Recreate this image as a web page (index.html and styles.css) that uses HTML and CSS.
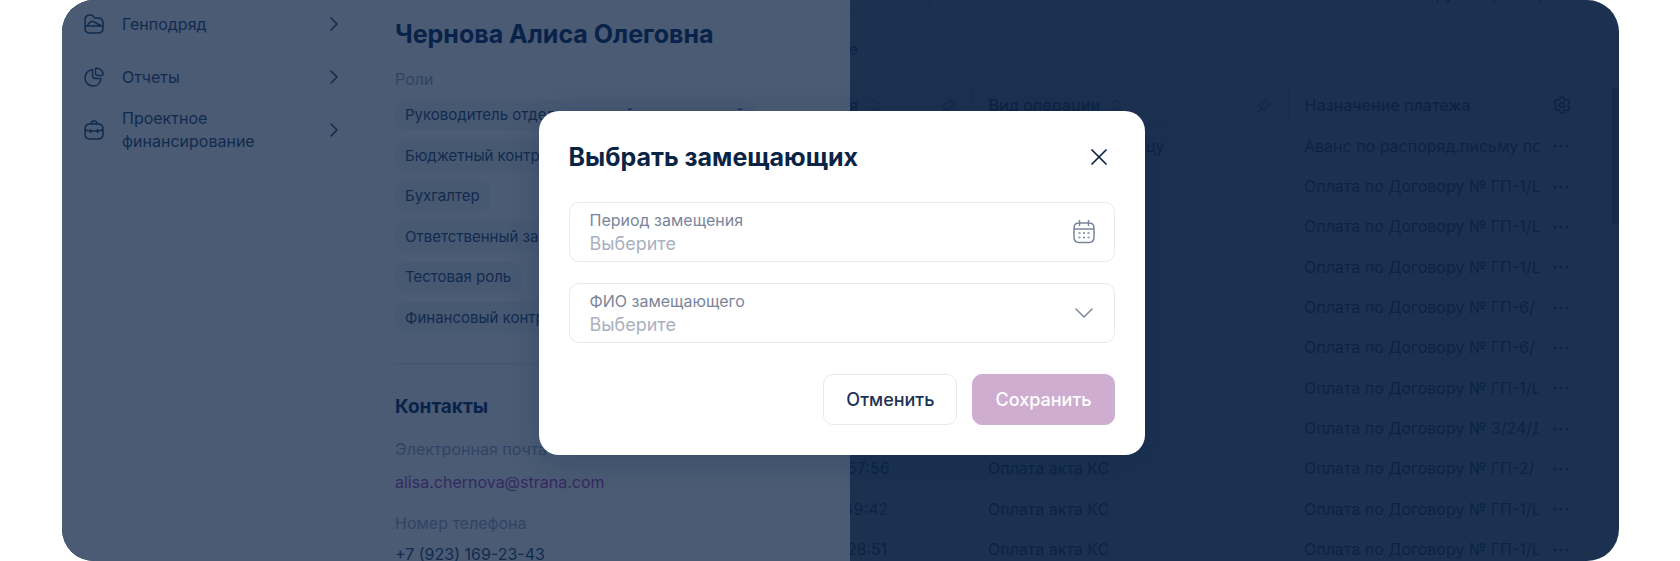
FILE: index.html
```html
<!DOCTYPE html>
<html lang="ru">

<head>
    <meta charset="UTF-8">
    <meta name="viewport" content="width=device-width, initial-scale=1.0">
    <title>Выбрать замещающих</title>
    <link rel="stylesheet" href="styles.css">
</head>

<body>
    <svg class="sprite" width="0" height="0">
        <symbol id="chevron" viewBox="0 0 8 14"><path d="M1 1l6 6-6 6" /></symbol>
        <symbol id="sort" viewBox="0 0 10 12"><path d="M1 4l4-3 4 3M1 8l4 3 4-3" /></symbol>
        <symbol id="pin" viewBox="0 0 16 16"><path d="M1 15l4.500-4.500M9.500 1.500l5 5-1.500 1-1.500 0-2.500 3 0 2-1.500 1.500-6-6 1.500-1.500 2 0 3.500-2.500 0-1.500z" /></symbol>
        <symbol id="dots" viewBox="0 0 16 4"><circle cx="2" cy="2" r="1.500" /><circle cx="8" cy="2" r="1.500" /><circle cx="14" cy="2" r="1.500" /></symbol>
    </svg>

    <div class="app">
        <div class="drawer">
            <nav class="sidebar">
                <a class="nav-item" href="#">
                    <svg class="nav-icon" viewBox="0 0 20 20"><path d="M1 6c0-3.500 1.500-5 5-5h1c1 0 1.600.3 2.200 1.100l1 1.300c.4.500.8.600 1.600.600H14c3.500 0 5 1.500 5 5v5c0 3.500-1.500 5-5 5H6c-3.500 0-5-1.500-5-5zM1 12h18M3.500 11.500c1.500-3 3.500-4.500 5.500-4 2.500.5 3 2.200 7.500 3.700" /></svg>
                    <span class="nav-label">Генподряд</span>
                    <svg class="nav-chevron"><use href="#chevron" /></svg>
                </a>
                <a class="nav-item" href="#">
                    <svg class="nav-icon" viewBox="0 0 20 20"><path d="M8.500 2.500v6c0 2 1 3 3 3h5.500c-.5 4.500-3.800 7.500-8 7.500-4.500 0-8-3.600-8-8 0-4.300 3.200-8 7.500-8.500zM12 1c4 .3 7 3 7 6.500 0 .6-.3 1-1 1h-4.500c-1.300 0-2-.7-2-2V2c0-.6.200-1 .5-1z" /></svg>
                    <span class="nav-label">Отчеты</span>
                    <svg class="nav-chevron"><use href="#chevron" /></svg>
                </a>
                <a class="nav-item" href="#">
                    <svg class="nav-icon" viewBox="0 0 20 20"><path d="M1 9c0-3.500 1.500-5 5-5h8c3.500 0 5 1.500 5 5v5c0 3.500-1.500 5-5 5H6c-3.500 0-5-1.500-5-5zM7 4c0-2 1-3 3-3s3 1 3 3M1 9c1 1.400 2.500 2 5 2h8c2.500 0 4-.6 5-2M6.500 9.500v3M13.500 9.500v3" /></svg>
                    <span class="nav-label">Проектное финансирование</span>
                    <svg class="nav-chevron"><use href="#chevron" /></svg>
                </a>
            </nav>

            <section class="profile">
                <h1>Чернова Алиса Олеговна</h1>
                <p class="muted">Роли</p>
                <ul class="roles">
                    <li>Руководитель отдела торговой координацией</li>
                    <li>Бюджетный контролер</li>
                    <li>Бухгалтер</li>
                    <li>Ответственный за оплату</li>
                    <li>Тестовая роль</li>
                    <li>Финансовый контролер</li>
                </ul>
                <div class="contacts">
                    <h2>Контакты</h2>
                    <p class="muted">Электронная почта</p>
                    <a class="email" href="mailto:alisa.chernova@strana.com">alisa.chernova@strana.com</a>
                    <p class="muted">Номер телефона</p>
                    <p>+7 (923) 169-23-43</p>
                </div>
            </section>
        </div>

        <main class="payments">
            <div class="toolbar">
                <div class="search"></div>
                <a class="reset" href="#">Загрузить реестр</a>
            </div>
            <p class="filter">Показать удаленные</p>
            <table>
                <thead>
                    <tr>
                        <th class="col-date"><div class="head"><span>Дата создания</span><svg class="sort"><use href="#sort" /></svg><svg class="pin"><use href="#pin" /></svg></div></th>
                        <th class="col-type"><div class="head"><span>Вид операции</span><svg class="sort"><use href="#sort" /></svg><svg class="pin"><use href="#pin" /></svg></div></th>
                        <th class="col-purpose">Назначение платежа</th>
                        <th class="col-actions"><svg class="gear" viewBox="0 0 18 18"><path d="M7.500 1h3l.7 2.200 1.600 1 2.300-.6 1.600 2.700L15.200 8v2l1.500 1.700-1.600 2.700-2.300-.6-1.600 1-.7 2.200h-3l-.7-2.200-1.600-1-2.300.6-1.600-2.700L2.800 10V8L1.300 6.300l1.600-2.700 2.300.6 1.600-1z" /><circle cx="9" cy="9" r="2.500" /></svg></th>
                    </tr>
                </thead>
                <tbody>
                    <tr><td>11.03.2024 15:02:11</td><td>Оплата третьему лицу</td><td class="col-purpose">Аванс по распоряд.письму подрядчику</td><td class="col-actions"><svg class="dots"><use href="#dots" /></svg></td></tr>
                    <tr><td>11.03.2024 15:01:40</td><td>Оплата акта КС</td><td class="col-purpose">Оплата по Договору № ГП-1/ЦС</td><td class="col-actions"><svg class="dots"><use href="#dots" /></svg></td></tr>
                    <tr><td>11.03.2024 15:01:12</td><td>Оплата акта КС</td><td class="col-purpose">Оплата по Договору № ГП-1/ЦС</td><td class="col-actions"><svg class="dots"><use href="#dots" /></svg></td></tr>
                    <tr><td>11.03.2024 15:00:54</td><td>Оплата акта КС</td><td class="col-purpose">Оплата по Договору № ГП-1/ЦС</td><td class="col-actions"><svg class="dots"><use href="#dots" /></svg></td></tr>
                    <tr><td>11.03.2024 15:00:31</td><td>Оплата акта КС</td><td class="col-purpose">Оплата по Договору № ГП-6/ ЦС</td><td class="col-actions"><svg class="dots"><use href="#dots" /></svg></td></tr>
                    <tr><td>11.03.2024 14:59:48</td><td>Оплата акта КС</td><td class="col-purpose">Оплата по Договору № ГП-6/ ЦС</td><td class="col-actions"><svg class="dots"><use href="#dots" /></svg></td></tr>
                    <tr><td>11.03.2024 14:59:20</td><td>Оплата акта КС</td><td class="col-purpose">Оплата по Договору № ГП-1/ЦС</td><td class="col-actions"><svg class="dots"><use href="#dots" /></svg></td></tr>
                    <tr><td>11.03.2024 14:58:32</td><td>Оплата акта КС</td><td class="col-purpose">Оплата по Договору № 3/24/ДС</td><td class="col-actions"><svg class="dots"><use href="#dots" /></svg></td></tr>
                    <tr><td>11.03.2024 14:57:56</td><td>Оплата акта КС</td><td class="col-purpose">Оплата по Договору № ГП-2/ ЦС</td><td class="col-actions"><svg class="dots"><use href="#dots" /></svg></td></tr>
                    <tr><td>11.03.2024 11:49:42</td><td>Оплата акта КС</td><td class="col-purpose">Оплата по Договору № ГП-1/ЦС</td><td class="col-actions"><svg class="dots"><use href="#dots" /></svg></td></tr>
                    <tr><td>11.03.2024 10:28:51</td><td>Оплата акта КС</td><td class="col-purpose">Оплата по Договору № ГП-1/ЦС</td><td class="col-actions"><svg class="dots"><use href="#dots" /></svg></td></tr>
                </tbody>
            </table>
            <div class="scrollbar"></div>
        </main>

        <div class="overlay">
            <form class="modal" role="dialog" aria-labelledby="modalTitle">
                <header class="modal-header">
                    <h2 id="modalTitle">Выбрать замещающих</h2>
                    <button type="button" class="close" aria-label="Закрыть">
                        <svg viewBox="0 0 16 16"><path d="M1 1l14 14M15 1L1 15" /></svg>
                    </button>
                </header>
                <div class="field">
                    <div class="field-text">
                        <label for="period">Период замещения</label>
                        <input type="text" id="period" placeholder="Выберите">
                    </div>
                    <svg class="calendar" viewBox="0 0 22 24"><path d="M1 8c0-3.500 1.500-5 5-5h10c3.500 0 5 1.500 5 5v9c0 4-1.500 5.500-5 5.500H6c-3.500 0-5-1.500-5-5.500zM1 9h20M6.500.5v5M15.500.5v5" /><path class="days" d="M5.500 13h2M10 13h2M14.500 13h2M5.500 17.500h2M10 17.500h2M14.500 17.500h2" /></svg>
                </div>
                <div class="field">
                    <div class="field-text">
                        <label for="person">ФИО замещающего</label>
                        <select id="person">
                            <option>Выберите</option>
                        </select>
                    </div>
                    <svg class="arrow" viewBox="0 0 18 10"><path d="M1 1l8 8 8-8" /></svg>
                </div>
                <div class="modal-actions">
                    <button type="button" class="btn">Отменить</button>
                    <button type="submit" class="btn btn-primary" disabled>Сохранить</button>
                </div>
            </form>
        </div>
    </div>
</body>

</html>
```
FILE: styles.css
```css
* {
    box-sizing: border-box;
}

body {
    margin: 0;
    background-color: #ffffff;
    font-family: Inter, "Liberation Sans", sans-serif;
    font-size: 16px;
    line-height: 23px;
    color: #112b4f;
}

h1,
h2,
p,
ul {
    margin: 0;
    padding: 0;
}

a {
    color: inherit;
    text-decoration: none;
}

svg {
    flex: none;
    fill: none;
    stroke: currentColor;
    stroke-width: 1.5;
    stroke-linecap: round;
    stroke-linejoin: round;
}

.sprite {
    position: absolute;
}

.app {
    position: relative;
    display: flex;
    height: 100vh;
    margin: 0 61px 0 62px;
    border-radius: 32px;
    overflow: hidden;
    background-color: #1c3150;
}

/* left drawer */
.drawer {
    position: relative;
    z-index: 1;
    display: flex;
    flex: none;
    width: 788px;
    background-color: #4a5b73;
}

.sidebar {
    display: flex;
    flex-direction: column;
    gap: 7px;
    width: 301px;
    padding: 1px 24px 0 22px;
    border-right: 1px solid #485971;
}

.nav-item {
    display: flex;
    align-items: center;
    gap: 18px;
    min-height: 46px;
}

.nav-icon {
    width: 20px;
    height: 20px;
}

.nav-label {
    flex: 1;
}

.nav-chevron {
    width: 8px;
    height: 14px;
}

.profile {
    flex: 1;
    padding: 18px 32px 0;
}

h1 {
    margin-bottom: 18px;
    font-size: 25px;
    line-height: 32px;
    font-weight: 700;
    color: #08224a;
}

.muted {
    color: #314365;
}

.roles {
    display: flex;
    flex-direction: column;
    align-items: flex-start;
    gap: 10px;
    margin-top: 9px;
    padding-bottom: 30px;
    border-bottom: 1px solid #435471;
    list-style: none;
}

.roles li {
    padding: 0 10px;
    border-radius: 10px;
    background-color: #475871;
    font-size: 15px;
    line-height: 30px;
    white-space: nowrap;
}

.roles li:nth-child(even) {
    line-height: 31px;
}

.contacts {
    padding-top: 29px;
}

.contacts h2 {
    margin-bottom: 17px;
    font-size: 19px;
    line-height: 28px;
    font-weight: 700;
    color: #08224a;
}

.email {
    display: block;
    margin: 10px 0 18px;
    color: #342a61;
}

.contacts p + p {
    margin-top: 8px;
}

/* payments table */
.payments {
    position: relative;
    flex: 1;
    min-width: 0;
    margin-left: -126px;
    color: #0c2443;
}

.toolbar {
    display: flex;
    justify-content: space-between;
    align-items: flex-end;
    height: 14px;
    margin-bottom: 24px;
}

.search {
    width: 206px;
    height: 40px;
    border: 1px solid #1a2d4c;
    border-radius: 10px;
}

.reset {
    margin: 0 72px 9px 0;
}

.filter {
    width: 134px;
    margin-bottom: 23px;
    white-space: nowrap;
    direction: rtl;
}

table {
    width: 100%;
    table-layout: fixed;
    border-collapse: collapse;
}

th {
    height: 41px;
    padding: 0 16px;
    border: solid #1a2d4c;
    border-width: 1px 0;
    font-weight: 500;
    text-align: left;
}

th + th:not(.col-actions) {
    border-left-width: 1px;
}

td {
    height: 40px;
    padding: 0 16px;
    white-space: nowrap;
}

tbody tr:nth-child(3n + 1) td {
    height: 41px;
}

.col-date {
    width: 248px;
}

.col-type {
    width: 316px;
}

.col-purpose {
    padding-right: 0;
    overflow: hidden;
}

.col-actions {
    width: 80px;
    padding: 0 0 0 14px;
}

.head {
    display: flex;
    align-items: center;
    gap: 11px;
}

.sort {
    width: 10px;
    height: 12px;
    stroke-width: 1;
    opacity: 0.5;
}

.pin {
    width: 15px;
    height: 15px;
    margin-left: auto;
    opacity: 0.5;
}

.gear {
    display: block;
    width: 18px;
    height: 18px;
}

.dots {
    display: block;
    width: 16px;
    height: 4px;
    fill: currentColor;
    stroke: none;
}

.scrollbar {
    position: absolute;
    top: 88px;
    right: 0;
    width: 7px;
    height: 137px;
    border-radius: 4px;
    background-color: #172b48;
}

/* modal */
.overlay {
    position: absolute;
    inset: 0;
    z-index: 2;
    display: flex;
    align-items: center;
    justify-content: center;
    padding: 4px 0 0 2px;
}

.modal {
    display: flex;
    flex-direction: column;
    gap: 21px;
    width: 606px;
    padding: 30px;
    border-radius: 20px;
    background-color: #ffffff;
    box-shadow: 0 8px 32px rgba(10, 36, 69, 0.2);
}

.modal-header {
    display: flex;
    align-items: center;
    justify-content: space-between;
    margin-bottom: 8px;
}

.modal-header h2 {
    font-size: 25px;
    line-height: 32px;
    font-weight: 700;
    color: #0a2445;
}

.close {
    display: flex;
    padding: 8px;
    border: none;
    background: none;
    color: #0a2445;
    cursor: pointer;
}

.close svg {
    width: 16px;
    height: 16px;
    stroke-width: 1.75;
}

.field {
    display: flex;
    align-items: center;
    height: 60px;
    padding: 0 19px 0 20px;
    border: 1px solid #e9e9ec;
    border-radius: 10px;
    color: #7a859b;
}

.field-text {
    display: flex;
    flex: 1;
    flex-direction: column;
}

.field input,
.field select {
    width: 100%;
    height: 23px;
    padding: 0;
    border: none;
    outline: none;
    background: none;
    appearance: none;
    font-family: inherit;
    font-size: 18px;
    line-height: 23px;
    color: #abb0c1;
}

.field input::placeholder {
    color: #abb0c1;
}

.calendar {
    width: 22px;
    height: 24px;
}

.calendar .days {
    stroke-linecap: butt;
}

.arrow {
    width: 18px;
    height: 10px;
    margin-right: 2px;
}

.modal-actions {
    display: flex;
    justify-content: flex-end;
    gap: 15px;
    margin-top: 10px;
}

.btn {
    height: 51px;
    padding: 0 22px;
    border: 1px solid #e9e9ec;
    border-radius: 10px;
    background-color: #ffffff;
    font-family: inherit;
    font-size: 18px;
    font-weight: 500;
    color: #1c3355;
    cursor: pointer;
}

.btn-primary {
    border-color: #ceadd0;
    background-color: #ceadd0;
    color: #ffffff;
}
```
